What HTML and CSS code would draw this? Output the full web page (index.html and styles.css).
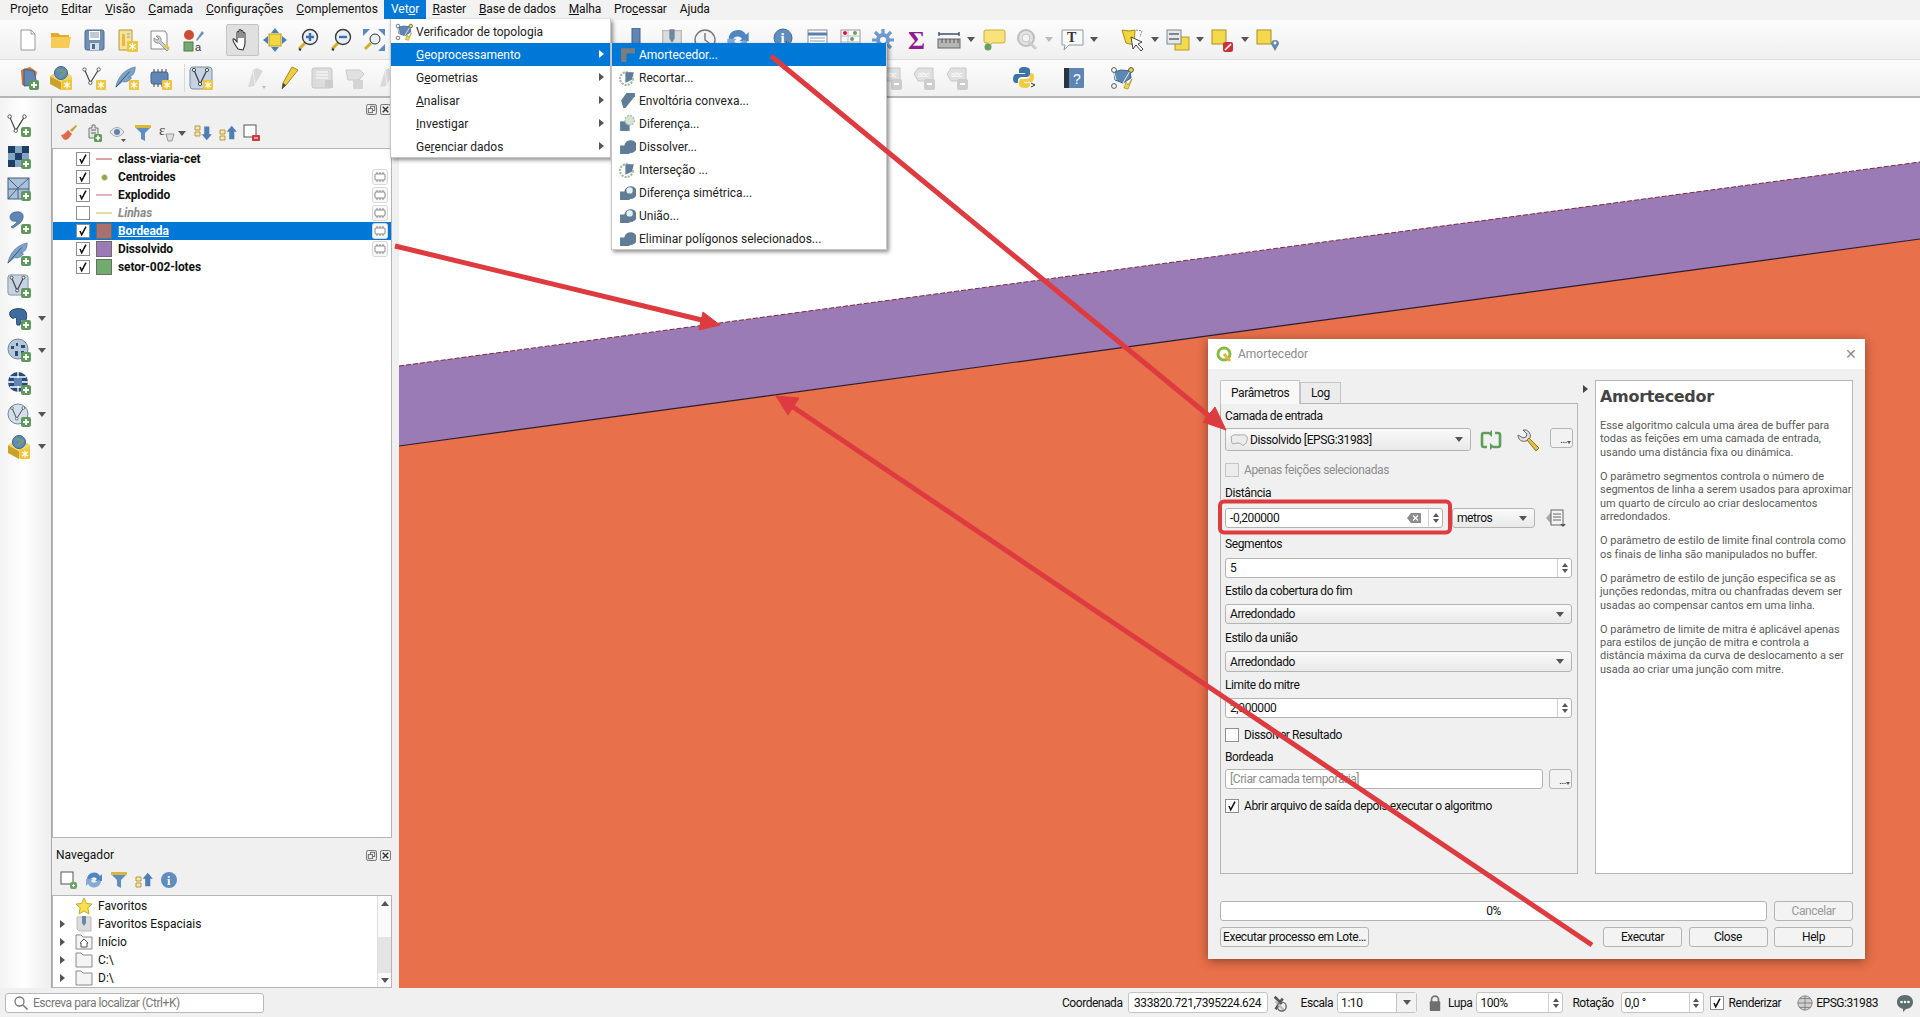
FILE: index.html
```html
<!DOCTYPE html>
<html lang="pt">
<head>
<meta charset="utf-8">
<title>QGIS - Amortecedor</title>
<link rel="stylesheet" href="styles.css">
</head>
<body>
<svg class="defs" aria-hidden="true">
<defs>
<symbol id="plus" viewBox="0 0 10 10"><rect width="10" height="10" rx="2" fill="#5f9a5c"/><path d="M5 2v6M2 5h6" stroke="#fff" stroke-width="2"/></symbol>
<symbol id="ast" viewBox="0 0 10 10"><rect width="10" height="10" rx="1" fill="#eec53c"/><path d="M5 1.5v7M2 3l6 4M8 3 2 7" stroke="#fff" stroke-width="1.2"/></symbol>
<symbol id="new" viewBox="0 0 24 24"><path d="M5 2h10l4 4v16H5z" fill="#fff" stroke="#9a9a9a"/><path d="M15 2v4h4" fill="none" stroke="#9a9a9a"/></symbol>
<symbol id="open" viewBox="0 0 24 24"><path d="M2 5h7l2 2h9v3H2z" fill="#e6a92c"/><path d="M2 9h20l-2 11H2z" fill="#f6cb58"/></symbol>
<symbol id="save" viewBox="0 0 24 24"><rect x="3" y="2" width="19" height="20" rx="2" fill="#6e90b6" stroke="#4e6b8c"/><rect x="7" y="3" width="11" height="9" fill="#fff"/><path d="M8 5h9M8 7h9M8 9h9" stroke="#7d93ab"/><rect x="8" y="15" width="9" height="7" fill="#d9dfe6"/><rect x="10" y="16" width="3" height="5" fill="#4e6b8c"/></symbol>
<symbol id="saveas" viewBox="0 0 24 24"><path d="M4 2h13v20H4z" fill="#f7e3a1" stroke="#b8962e"/><path d="M7 6h3v12H7z" fill="#e6b93c"/><path d="M12 6h3M12 9h3" stroke="#999"/><use href="#ast" x="12" y="13" width="11" height="11"/></symbol>
<symbol id="props" viewBox="0 0 24 24"><path d="M3 3h14l2 3v15H3z" fill="#fff" stroke="#888"/><path d="M8 8a4 4 0 0 1 5 5l8 8-2 2-8-8a4 4 0 0 1-5-5l3 2 2-1z" fill="#cfcfcf" stroke="#777" stroke-width=".7"/><path d="M16 18l4 4 2-2-4-4z" fill="#e3c34c"/></symbol>
<symbol id="style" viewBox="0 0 24 24"><circle cx="8" cy="7" r="5" fill="#cc4b32"/><rect x="3" y="14" width="9" height="9" fill="#74a872" stroke="#4f7d4c"/><path d="M15 12l6-9 2 2-7 8z" fill="#6b93bd"/><text x="14" y="23" class="ictxt">a</text></symbol>
<symbol id="pan" viewBox="0 0 24 24"><path d="M8 21c-2-3-5-7-5-9s2-1 3 1l1 1V5c0-2 2-2 2 0v5-7c0-2 2-2 2 0v7-6c0-2 2-2 2 0v6-4c0-2 2-2 2 0v9c0 3-1 5-2 7z" fill="#fff" stroke="#333" stroke-width="1.1"/></symbol>
<symbol id="pansel" viewBox="0 0 24 24"><rect x="6" y="6" width="12" height="12" fill="#f2d83e" stroke="#b49b25"/><path d="M12 0l4 5H8zM12 24l-4-5h8zM0 12l5-4v8zM24 12l-5 4V8z" fill="#4f7fb2"/></symbol>
<symbol id="zin" viewBox="0 0 24 24"><path d="M10 14l-7 7" stroke="#d4ae2e" stroke-width="3"/><path d="M3 21l2 1" stroke="#333" stroke-width="2"/><circle cx="14" cy="9" r="7.5" fill="#e8eef6" stroke="#3a3a3a" stroke-width="1.4"/><path d="M14 5v8M10 9h8" stroke="#3f6fa8" stroke-width="2.4"/></symbol>
<symbol id="zout" viewBox="0 0 24 24"><path d="M10 14l-7 7" stroke="#d4ae2e" stroke-width="3"/><path d="M3 21l2 1" stroke="#333" stroke-width="2"/><circle cx="14" cy="9" r="7.5" fill="#e8eef6" stroke="#3a3a3a" stroke-width="1.4"/><path d="M10 9h8" stroke="#3f6fa8" stroke-width="2.4"/></symbol>
<symbol id="zfull" viewBox="0 0 24 24"><path d="M1 1h7L1 8zM23 1h-7l7 7zM23 23h-7l7-7z" fill="#5d8abb"/><path d="M9 15l-6 6" stroke="#d4ae2e" stroke-width="3"/><circle cx="13" cy="11" r="5" fill="#e8eef6" stroke="#333"/></symbol>
<symbol id="lbar" viewBox="0 0 24 24"><path d="M5 0h8v18h9v5H5z" fill="#5f86b4" stroke="#3e6288"/></symbol>
<symbol id="clock" viewBox="0 0 24 24"><circle cx="12" cy="12" r="10" fill="#f3f3f3" stroke="#777" stroke-width="1.4"/><path d="M12 5v7l4 3" fill="none" stroke="#777" stroke-width="1.4"/></symbol>
<symbol id="info" viewBox="0 0 24 24"><circle cx="11" cy="10" r="9" fill="#5f8dbd" stroke="#3f6b9b"/><text x="8.5" y="15" class="icinfo">i</text><path d="M14 13l8 6-4 .5-1 4z" fill="#fff" stroke="#555"/></symbol>
<symbol id="table" viewBox="0 0 24 24"><rect x="3" y="2" width="19" height="20" fill="#fff" stroke="#7c8ea3"/><path d="M3 6h19" stroke="#5b7fa8" stroke-width="3"/><path d="M5 10h15M5 13h15M5 16h15M5 19h15" stroke="#8ea4bb"/></symbol>
<symbol id="stats" viewBox="0 0 24 24"><rect x="3" y="2" width="19" height="20" fill="#fff" stroke="#999"/><path d="M3 8h19M3 14h19M10 2v20" stroke="#bbb"/><circle cx="7" cy="5" r="2" fill="#d14"/><circle cx="17" cy="5" r="2" fill="#6a9e66"/><circle cx="14" cy="11" r="2" fill="#6a9e66"/><circle cx="7" cy="17" r="2" fill="#d14"/></symbol>
<symbol id="gear" viewBox="0 0 24 24"><circle cx="12" cy="12" r="7" fill="#6e9ace"/><path d="M12 1v22M1 12h22M4 4l16 16M20 4 4 20" stroke="#6e9ace" stroke-width="3.2"/><circle cx="12" cy="12" r="3" fill="#fff"/></symbol>
<symbol id="sigma" viewBox="0 0 24 24"><text x="4" y="21" class="icsig">Σ</text></symbol>
<symbol id="measure" viewBox="0 0 24 24"><path d="M2 6h20M2 4v4M22 4v4" stroke="#3d5168" stroke-width="1.4"/><rect x="1" y="11" width="22" height="9" fill="#b6b6b6" stroke="#666"/><path d="M5 11v4M9 11v4M13 11v4M17 11v4M21 11v4" stroke="#555"/></symbol>
<symbol id="tip" viewBox="0 0 24 24"><path d="M4 2h17a2 2 0 0 1 2 2v9a2 2 0 0 1-2 2H10l-3 4-1-4H4a2 2 0 0 1-2-2V4a2 2 0 0 1 2-2z" fill="#f8e27a" stroke="#c9ae3a"/><circle cx="6" cy="19" r="3.5" fill="#6a9e66"/></symbol>
<symbol id="gzoom" viewBox="0 0 24 24"><circle cx="11" cy="10" r="8" fill="#e3e3e3" stroke="#bdbdbd" stroke-width="2"/><circle cx="11" cy="10" r="4" fill="#f3f3f3" stroke="#c4c4c4"/><path d="M14 14l7 7" stroke="#ccc" stroke-width="3"/></symbol>
<symbol id="ttool" viewBox="0 0 24 24"><path d="M2 2h21v15H9l-5 5 1-5H2z" fill="#f7f9fb" stroke="#8d98a3"/><text x="7" y="14" class="ict">T</text></symbol>
<symbol id="sel" viewBox="0 0 24 24"><path d="M1 2l7 1 6-1-1 15-8-2z" fill="#f1d53a" stroke="#a28c1e"/><path d="M15 2l6 1-2 6" fill="none" stroke="#888" stroke-dasharray="2 1"/><path d="M10 9l2 12 3-4 5 6 2-2-5-5 4-2z" fill="#fff" stroke="#444"/></symbol>
<symbol id="selform" viewBox="0 0 24 24"><rect x="9" y="9" width="14" height="13" fill="#f2d94e" stroke="#b49b25"/><rect x="1" y="2" width="14" height="14" fill="#e7e7e7" stroke="#7a8794"/><path d="M3 6h10M3 11h10" stroke="#7a8794" stroke-width="2"/></symbol>
<symbol id="desel" viewBox="0 0 24 24"><rect x="1" y="2" width="14" height="14" fill="#f4da4a" stroke="#a88f24"/><rect x="12" y="14" width="10" height="10" rx="2" fill="#c8343a"/><path d="M14 22l6-6" stroke="#fff" stroke-width="1.6"/></symbol>
<symbol id="selloc" viewBox="0 0 24 24"><rect x="1" y="2" width="14" height="14" fill="#f4da4a" stroke="#a88f24"/><path d="M19 23l-4-7a4 4 0 1 1 8 0z" fill="#6b8aa8"/><circle cx="19" cy="15" r="1.4" fill="#fff"/></symbol>
<symbol id="stack" viewBox="0 0 24 24"><path d="M5 4l9-3 7 5-3 14-12-1z" fill="#d7772e"/><path d="M8 3l10 2 3 14-13 1z" fill="#5f86b4" stroke="#3e6288"/><use href="#plus" x="13" y="14" width="10" height="10"/></symbol>
<symbol id="cube" viewBox="0 0 24 24"><path d="M1 10l11 6v8L1 18z" fill="#c9a227"/><path d="M12 16l11-6v8l-11 6z" fill="#f1d34a"/><path d="M1 10 12 3l11 7-11 6z" fill="#eed46c"/><circle cx="12" cy="7" r="6.5" fill="#5e8bbc" stroke="#3c638d"/><path d="M8 5c3-2 6 0 8 1-1 3-5 2-5 5" stroke="#7a9f6a" stroke-width="2" fill="none"/><use href="#ast" x="13" y="14" width="10" height="10"/></symbol>
<symbol id="vnode" viewBox="0 0 24 24"><path d="M3 3l7 16L20 3" fill="none" stroke="#444" stroke-width="1.4"/><circle cx="3" cy="3" r="2" fill="#fff" stroke="#444"/><circle cx="10" cy="19" r="2" fill="#fff" stroke="#444"/><circle cx="20" cy="3" r="2" fill="#fff" stroke="#444"/></symbol>
<symbol id="vast" viewBox="0 0 24 24"><use href="#vnode" width="20" height="22"/><use href="#ast" x="14" y="14" width="10" height="10"/></symbol>
<symbol id="vplus" viewBox="0 0 24 24"><use href="#vnode" width="21" height="23"/><use href="#plus" x="14" y="14" width="10" height="10"/></symbol>
<symbol id="feather" viewBox="0 0 24 24"><path d="M1 23C3 13 9 4 22 1c0 7-3 10-7 11l3 1c-3 4-7 5-10 4z" fill="#7fa2c8" stroke="#466d97" stroke-width=".7"/><path d="M1 23 16 6" stroke="#2f4f72"/></symbol>
<symbol id="feathast" viewBox="0 0 24 24"><use href="#feather" width="22" height="22"/><use href="#ast" x="14" y="14" width="10" height="10"/></symbol>
<symbol id="featplus" viewBox="0 0 24 24"><use href="#feather" width="22" height="22"/><use href="#plus" x="14" y="14" width="10" height="10"/></symbol>
<symbol id="chip" viewBox="0 0 24 24"><rect x="3" y="6" width="17" height="12" rx="2" fill="#5f86b4" stroke="#3e6288"/><path d="M6 3v3M10 3v3M14 3v3M18 3v3M6 18v3M10 18v3M14 18v3" stroke="#444"/><use href="#ast" x="14" y="14" width="10" height="10"/></symbol>
<symbol id="vbox" viewBox="0 0 24 24"><rect x="1" y="1" width="22" height="22" rx="3" fill="#c5d3e3" stroke="#7d8ea1"/><path d="M5 4l6 14 7-14" fill="none" stroke="#444" stroke-width="1.3"/><circle cx="5" cy="4" r="1.6" fill="#fff" stroke="#444"/><circle cx="11" cy="18" r="1.6" fill="#fff" stroke="#444"/><circle cx="18" cy="4" r="1.6" fill="#fff" stroke="#444"/></symbol>
<symbol id="vboxast" viewBox="0 0 24 24"><use href="#vbox"/><use href="#ast" x="14" y="14" width="10" height="10"/></symbol>
<symbol id="vboxplus" viewBox="0 0 24 24"><use href="#vbox" width="22" height="22"/><use href="#plus" x="14" y="14" width="10" height="10"/></symbol>
<symbol id="gpen" viewBox="0 0 24 24"><path d="M4 21 9 4l4-2 6 3-9 15z" fill="#d9d9d9"/><path d="M9 4l2 16" stroke="#eee"/><path d="M18 20h4l-2 3z" fill="#bbb"/></symbol>
<symbol id="pencil" viewBox="0 0 24 24"><path d="M15 1l6 3-12 15-4 4 1-6z" fill="#f0d041" stroke="#a08820"/><path d="M5 23l1-6 3 2z" fill="#444"/></symbol>
<symbol id="gsave" viewBox="0 0 24 24"><rect x="2" y="2" width="20" height="20" rx="2" fill="#dcdcdc" stroke="#c6c6c6"/><path d="M6 6h12M6 9h12M6 12h12" stroke="#f3f3f3" stroke-width="1.4"/><rect x="15" y="14" width="8" height="8" fill="#ccc"/></symbol>
<symbol id="gcloud" viewBox="0 0 24 24"><path d="M3 4h14l4 4-5 6H5z" fill="#e1e1e1" stroke="#c9c9c9"/><rect x="10" y="14" width="10" height="9" fill="#d4d4d4"/></symbol>
<symbol id="abc" viewBox="0 0 24 24"><path d="M5 2h15v13H5L1 8z" fill="#e0e0e0" stroke="#c8c8c8"/><text x="5" y="11" class="icabc">abc</text><rect x="11" y="13" width="11" height="11" rx="2" fill="#cdcdcd"/><path d="M14 18h5" stroke="#fff" stroke-width="2"/></symbol>
<symbol id="python" viewBox="0 0 24 24"><path d="M11 1c-4 0-5 2-5 3v3h6v1H3c-2 0-3 3-3 5s1 4 3 4h2v-3c0-2 2-3 4-3h5c1 0 3-1 3-3V4c0-2-3-3-6-3z" fill="#3c74a8"/><path d="M12 22c4 0 5-2 5-3v-2h-6v-1h7c2 0 3-2 3-5s-1-4-3-4h-1v3c0 2-2 3-4 3H8c-1 0-2 1-2 3v3c0 2 3 3 6 3z" fill="#f4cc44"/><path d="M18 17l4 2-4 2" fill="none" stroke="#333"/></symbol>
<symbol id="help" viewBox="0 0 24 24"><rect x="2" y="2" width="20" height="20" rx="1" fill="#5c85b4"/><rect x="2" y="2" width="5" height="20" fill="#2a3340"/><text x="11" y="18" class="ichelp">?</text></symbol>
<symbol id="topo" viewBox="0 0 24 24"><path d="M4 6l7-2 9 1 1 7-8 5-8-3z" fill="#5f86b4" stroke="#3e6288"/><path d="M4 6l2 8M20 5l-7 12" stroke="#eee"/><circle cx="4" cy="4" r="2.4" fill="#fff" stroke="#555"/><circle cx="21" cy="4" r="2.4" fill="#f3d53c" stroke="#555"/><circle cx="4" cy="20" r="2.4" fill="#fff" stroke="#555"/><path d="M14 22l2-6 2 3 4-6-4 10z" fill="#f3d53c" stroke="#8f7a18" stroke-width=".6"/></symbol>
<symbol id="raster" viewBox="0 0 24 24"><path d="M1 1h7v7H1zM15 1h7v7h-7zM8 8h7v7H8zM1 15h7v7H1z" fill="#1d3f66"/><path d="M8 1h7v7H8zM1 8h7v7H1zM15 8h7v7h-7zM8 15h7v7H8z" fill="#84a4c6"/><use href="#plus" x="14" y="14" width="10" height="10"/></symbol>
<symbol id="mesh" viewBox="0 0 24 24"><rect x="1" y="1" width="21" height="21" fill="#a9c1da" stroke="#45607d"/><path d="M1 1l10 10 11-10M1 22l10-11M1 12h21M11 11v11" stroke="#45607d" fill="none"/><use href="#plus" x="14" y="14" width="10" height="10"/></symbol>
<symbol id="comma" viewBox="0 0 24 24"><path d="M9 2c5-1 8 2 7 6-1 5-6 7-10 10l-2-1c3-2 6-4 6-6-3 1-7 0-7-4 0-3 3-5 6-5z" fill="#5f86b4" stroke="#3e6288" stroke-width=".7"/><use href="#plus" x="14" y="14" width="10" height="10"/></symbol>
<symbol id="pg" viewBox="0 0 24 24"><path d="M3 6c2-4 14-5 16 0 2 6-1 11-3 12 0-3-1-5-2-5l-1 6h-3c-1-3 0-6-1-8-2 1-3 2-4 1C3 11 2 8 3 6z" fill="#3f6d9e" stroke="#27476b"/><use href="#plus" x="14" y="14" width="10" height="10"/></symbol>
<symbol id="gwms" viewBox="0 0 24 24"><circle cx="11" cy="11" r="10" fill="#b5c7db" stroke="#6d87a3"/><path d="M4 8h3v3H4zM9 5h2v3H9zM14 7h4v3h-4zM8 13h3v5H8zM14 13h3v3h-3z" fill="#2e4b6b"/><use href="#plus" x="14" y="14" width="10" height="10"/></symbol>
<symbol id="wcs" viewBox="0 0 24 24"><circle cx="11" cy="11" r="10" fill="#274a78"/><path d="M1 11h20M11 1v20M3 6h16M3 16h16" stroke="#fff" stroke-width="1.3"/><rect x="7" y="7" width="8" height="8" fill="#5f86b4"/><use href="#plus" x="14" y="14" width="10" height="10"/></symbol>
<symbol id="wfs" viewBox="0 0 24 24"><circle cx="11" cy="11" r="10" fill="#d3dfeb" stroke="#6d87a3"/><use href="#vnode" x="3" y="3" width="16" height="16"/><use href="#plus" x="14" y="14" width="10" height="10"/></symbol>
<symbol id="brush" viewBox="0 0 18 18"><path d="M10 6l6-5 1 1-5 6z" fill="#c8a02b"/><path d="M1 11c3 0 5-3 7-5l4 4c-2 3-4 6-7 6-2-1-3-3-4-5z" fill="#dd6b48"/></symbol>
<symbol id="addgrp" viewBox="0 0 18 18"><path d="M7 1h3v3h3v10H4V4h3z" fill="#e3e3e3" stroke="#6c7c70"/><path d="M6 6h5M6 9h5" stroke="#666"/><use href="#plus" x="9" y="10" width="8" height="8"/></symbol>
<symbol id="eye" viewBox="0 0 18 18"><path d="M1 8c4-6 10-6 14 0-4 6-10 6-14 0z" fill="#e6e6e6" stroke="#aaa"/><circle cx="8" cy="8" r="3" fill="#5d83ab"/><path d="M12 15h5l-2.500 3z" fill="#555"/></symbol>
<symbol id="filter" viewBox="0 0 18 18"><path d="M1 1h16v2l-6 6v8l-4-2V9L1 3z" fill="#5f8fbf"/><path d="M1 1h16v3H1z" fill="#d8b93a"/></symbol>
<symbol id="epsilon" viewBox="0 0 18 18"><text x="1" y="11" class="iceps">ε</text><path d="M8 10h8l-2 7h-4z" fill="#ddd" stroke="#999"/></symbol>
<symbol id="expand" viewBox="0 0 18 18"><path d="M1 2h5v4H1zM1 8h5v4H1z" fill="#f4e6b0" stroke="#b59b3e"/><path d="M9 1h6v9h3l-6 7-6-7h3z" fill="#4f7fb2" transform="scale(.85) translate(3 2)"/></symbol>
<symbol id="collapse" viewBox="0 0 18 18"><path d="M1 6h5v4H1zM1 12h5v4H1z" fill="#f4e6b0" stroke="#b59b3e"/><path d="M12 1l6 7h-3v9H9V8H6z" fill="#4f7fb2" transform="scale(.85) translate(3 1)"/></symbol>
<symbol id="rem" viewBox="0 0 18 18"><rect x="1" y="1" width="12" height="12" fill="#fff" stroke="#555"/><rect x="9" y="11" width="8" height="6" rx="1" fill="#cc3a3a"/><path d="M11 14h4" stroke="#fff"/></symbol>
<symbol id="newf" viewBox="0 0 18 18"><rect x="1" y="1" width="12" height="12" fill="#fff" stroke="#555"/><rect x="10" y="11" width="7" height="7" rx="2" fill="#6aa567"/><path d="M13.500 13v3M12 14.500h3" stroke="#fff"/></symbol>
<symbol id="refresh" viewBox="0 0 18 18"><path d="M2 8a7 7 0 0 1 13-3l2-2v7h-7l2-2a4 4 0 0 0-7 1z" fill="#4f86c0"/><path d="M16 10a7 7 0 0 1-13 3l-2 2V8h7l-2 2a4 4 0 0 0 7-1z" fill="#85abd2"/></symbol>
<symbol id="inf" viewBox="0 0 18 18"><circle cx="9" cy="9" r="8" fill="#5f8dbd"/><text x="7" y="14" class="icinf">i</text></symbol>
<symbol id="star" viewBox="0 0 18 18"><path d="M9 1l2.400 5.500L17 7l-4.200 3.800L14 17l-5-3-5 3 1.200-6.200L1 7l5.600-.5z" fill="#f7e14e" stroke="#c8a92a"/></symbol>
<symbol id="bmark" viewBox="0 0 18 18"><path d="M2 2h14v14H4l-2-2z" fill="#dcdcdc" stroke="#bbb"/><path d="M7 1h4v7l-2 3-2-3z" fill="#6d87a3"/></symbol>
<symbol id="fold" viewBox="0 0 18 18"><path d="M1 2h5l2 2h9v12H1z" fill="#f4f4f4" stroke="#8a8a8a"/></symbol>
<symbol id="home" viewBox="0 0 18 18"><use href="#fold"/><path d="M9 6l4 4h-1v4H6v-4H5z" fill="#fff" stroke="#555"/></symbol>
<symbol id="ind" viewBox="0 0 16 16"><rect x=".5" y=".5" width="15" height="15" rx="2" fill="#f8f8f8" stroke="#d8d8d8"/><rect x="3" y="5" width="10" height="6" rx="1" fill="#fff" stroke="#8a8a8a"/><path d="M5 3v2M8 3v2M11 3v2M5 11v2M8 11v2M11 11v2" stroke="#8a8a8a"/></symbol>
<symbol id="chk" viewBox="0 0 14 14"><path d="M3.500 7l2 4.500L10.500 2" fill="none" stroke="#111" stroke-width="1.800"/></symbol>
<symbol id="m-buf" viewBox="0 0 16 16"><path d="M2 2h13v5H7v8H2z" fill="#7d7d7d"/></symbol>
<symbol id="m-clip" viewBox="0 0 16 16"><circle cx="7" cy="9" r="6" fill="none" stroke="#9fbb9d" stroke-width="2" stroke-dasharray="2 1"/><path d="M6 3h8l-2 7-6 3z" fill="#5f7d96"/></symbol>
<symbol id="m-hull" viewBox="0 0 16 16"><path d="M2 8l5-7h8v3L6 15H4z" fill="#5f7d96"/></symbol>
<symbol id="m-diff" viewBox="0 0 16 16"><rect x="1" y="6" width="9" height="9" fill="#5f7d96"/><circle cx="10" cy="5" r="4.500" fill="#d7e4d5" stroke="#9fbb9d" stroke-dasharray="2 1"/></symbol>
<symbol id="m-dis" viewBox="0 0 16 16"><path d="M1 7h4a6 6 0 1 1 5 7v1H1z" fill="#5f7d96"/></symbol>
<symbol id="m-sym" viewBox="0 0 16 16"><path d="M1 7h4a6 6 0 1 1 5 7v1H1z" fill="#5f7d96"/><circle cx="10" cy="6" r="3" fill="#e6edf3"/></symbol>
<symbol id="qlogo" viewBox="0 0 16 16"><circle cx="8" cy="8" r="6" fill="none" stroke="#8cbb45" stroke-width="3"/><path d="M8 8l6 7" stroke="#e2b43a" stroke-width="3"/></symbol>
<symbol id="loop" viewBox="0 0 22 22"><path d="M9 4H4a2 2 0 0 0-2 2v10a2 2 0 0 0 2 2h3M13 18h5a2 2 0 0 0 2-2V6a2 2 0 0 0-2-2h-3" fill="none" stroke="#5e9e5b" stroke-width="2.600"/><path d="M12 1v7L8 4.500zM10 14v7l4-3.500z" fill="#5e9e5b"/></symbol>
<symbol id="wrench" viewBox="0 0 24 24"><path d="M2 7a6 6 0 0 0 8 6l2-1 2-2a6 6 0 0 0-7-8l4 4-1 3-3 1z" fill="#e2e2e2" stroke="#666"/><path d="M11 12l2-2 10 10-3 3z" fill="#e0c040" stroke="#8b7720"/></symbol>
<symbol id="poly" viewBox="0 0 18 14"><path d="M1 4c2-3 5-2 8-2s7-1 8 2-1 7-3 8-3-2-6-2-5 2-6 0 0-4-1-6z" fill="#ececec" stroke="#a5a5a5"/></symbol>
<symbol id="data" viewBox="0 0 22 20"><path d="M1 10l6-7v14z" fill="#aaa"/><rect x="6" y="2" width="12" height="15" fill="#f3f3f3" stroke="#666"/><path d="M8 6h8M8 9h8M8 12h8" stroke="#666"/><path d="M15 16h6l-3 3z" fill="#555"/></symbol>
<symbol id="nocrs" viewBox="0 0 18 22"><path d="M3 4l8 8m-7 6 8-12" stroke="#555" stroke-width="3"/><path d="M4 9l9 10" stroke="#c0c0c0" stroke-width="3"/><circle cx="11" cy="15" r="5" fill="none" stroke="#666" stroke-width="1.600"/></symbol>
<symbol id="lock" viewBox="0 0 16 20"><path d="M4 9V6a4 4 0 0 1 8 0v3" fill="none" stroke="#777" stroke-width="2"/><rect x="2" y="8" width="12" height="11" rx="1" fill="#6f6f6f"/></symbol>
<symbol id="globe" viewBox="0 0 18 18"><circle cx="9" cy="9" r="8" fill="#d0d0d0" stroke="#7d7d7d"/><path d="M1 9h16M9 1v16M3 4h12M3 14h12" stroke="#7d7d7d"/></symbol>
<symbol id="msg" viewBox="0 0 18 18"><path d="M9 1c5 0 8 3 8 7s-3 7-7 7l-3 3v-3c-3-1-6-3-6-7s3-7 8-7z" fill="#5e6e6e"/><circle cx="5.500" cy="8" r="1.300" fill="#fff"/><circle cx="9" cy="8" r="1.300" fill="#fff"/><circle cx="12.500" cy="8" r="1.300" fill="#fff"/></symbol>
<symbol id="search" viewBox="0 0 14 14"><circle cx="5.500" cy="5.500" r="4.500" fill="none" stroke="#777" stroke-width="1.300"/><path d="M9 9l4.500 4.500" stroke="#777" stroke-width="1.500"/></symbol>
<symbol id="clear" viewBox="0 0 14 10"><path d="M4 0h10v10H4L0 5z" fill="#8c8c8c"/><path d="M6 2.500l5 5m0-5-5 5" stroke="#fff" stroke-width="1.200"/></symbol>
<symbol id="dockf" viewBox="0 0 12 12"><rect x=".5" y=".5" width="11" height="11" rx="2" fill="#eee" stroke="#666"/><rect x="5" y="2.500" width="4.500" height="4.500" fill="none" stroke="#666"/><rect x="2.500" y="5" width="4.500" height="4.500" fill="#eee" stroke="#666"/></symbol>
<symbol id="dockx" viewBox="0 0 12 12"><rect x=".5" y=".5" width="11" height="11" rx="2" fill="#eee" stroke="#666"/><path d="M3 3l6 6m0-6-6 6" stroke="#333" stroke-width="1.500"/></symbol>
</defs>
</svg>

<div class="app">
  <nav class="menubar">
    <span class="mi">Pro<u>j</u>eto</span><span class="mi"><u>E</u>ditar</span><span class="mi"><u>V</u>isão</span><span class="mi"><u>C</u>amada</span><span class="mi"><u>C</u>onfigurações</span><span class="mi"><u>C</u>omplementos</span><span class="mi act">Vet<u>o</u>r</span><span class="mi"><u>R</u>aster</span><span class="mi"><u>B</u>ase de dados</span><span class="mi"><u>M</u>alha</span><span class="mi">Pro<u>c</u>essar</span><span class="mi">A<u>j</u>uda</span>
  </nav>

  <div class="tbar r1">
    <span class="grip"></span>
    <span class="tb"><svg class="i"><use href="#new"/></svg></span>
    <span class="tb"><svg class="i"><use href="#open"/></svg></span>
    <span class="tb"><svg class="i"><use href="#save"/></svg></span>
    <span class="tb"><svg class="i"><use href="#saveas"/></svg></span>
    <span class="tb"><svg class="i"><use href="#props"/></svg></span>
    <span class="tb"><svg class="i"><use href="#style"/></svg></span>
    <span class="sep s16"></span>
    <span class="tb on"><svg class="i"><use href="#pan"/></svg></span>
    <span class="tb"><svg class="i"><use href="#pansel"/></svg></span>
    <span class="tb"><svg class="i"><use href="#zin"/></svg></span>
    <span class="tb"><svg class="i"><use href="#zout"/></svg></span>
    <span class="tb"><svg class="i"><use href="#zfull"/></svg></span>
    <span class="sp232"></span>
    <span class="tb"><svg class="i"><use href="#lbar"/></svg></span>
    <span class="tb"><svg class="i"><use href="#bmark"/></svg></span>
    <span class="tb"><svg class="i"><use href="#clock"/></svg></span>
    <span class="tb"><svg class="i"><use href="#refresh"/></svg></span>
    <span class="sep s13"></span>
    <span class="tb"><svg class="i"><use href="#info"/></svg></span>
    <span class="tb"><svg class="i"><use href="#table"/></svg></span>
    <span class="tb"><svg class="i"><use href="#stats"/></svg></span>
    <span class="tb"><svg class="i"><use href="#gear"/></svg></span>
    <span class="tb"><svg class="i"><use href="#sigma"/></svg></span>
    <span class="tb w"><svg class="i"><use href="#measure"/></svg><span class="dn"></span></span>
    <span class="tb"><svg class="i"><use href="#tip"/></svg></span>
    <span class="tb w"><svg class="i"><use href="#gzoom"/></svg><span class="dn lite"></span></span>
    <span class="tb w"><svg class="i"><use href="#ttool"/></svg><span class="dn"></span></span>
    <span class="sep s16"></span>
    <span class="tb w"><svg class="i"><use href="#sel"/></svg><span class="dn"></span></span>
    <span class="tb w"><svg class="i"><use href="#selform"/></svg><span class="dn"></span></span>
    <span class="tb w"><svg class="i"><use href="#desel"/></svg><span class="dn"></span></span>
    <span class="tb"><svg class="i"><use href="#selloc"/></svg></span>
  </div>

  <div class="tbar r2">
    <span class="grip"></span>
    <span class="tb"><svg class="i"><use href="#stack"/></svg></span>
    <span class="tb"><svg class="i"><use href="#cube"/></svg></span>
    <span class="tb"><svg class="i"><use href="#vast"/></svg></span>
    <span class="tb"><svg class="i"><use href="#feathast"/></svg></span>
    <span class="tb"><svg class="i"><use href="#chip"/></svg></span>
    <span class="sep s8 ln"></span>
    <span class="tb"><svg class="i"><use href="#vboxast"/></svg></span>
    <span class="sep s22"></span>
    <span class="tb"><svg class="i"><use href="#gpen"/></svg></span>
    <span class="tb"><svg class="i"><use href="#pencil"/></svg></span>
    <span class="tb"><svg class="i"><use href="#gsave"/></svg></span>
    <span class="tb"><svg class="i"><use href="#gcloud"/></svg></span>
    <span class="tb"><svg class="i"><use href="#gpen"/></svg></span>
    <span class="sp471"></span>
    <span class="tb"><svg class="i"><use href="#abc"/></svg></span>
    <span class="tb"><svg class="i"><use href="#abc"/></svg></span>
    <span class="tb"><svg class="i"><use href="#abc"/></svg></span>
    <span class="sep s34"></span>
    <span class="tb"><svg class="i"><use href="#python"/></svg></span>
    <span class="sep s16"></span>
    <span class="tb"><svg class="i"><use href="#help"/></svg></span>
    <span class="sep s15"></span>
    <span class="tb"><svg class="i"><use href="#topo"/></svg></span>
  </div>

  <main class="work">
    <aside class="side">
      <span class="tb lt"><svg class="i"><use href="#vplus"/></svg></span>
      <span class="tb lt"><svg class="i"><use href="#raster"/></svg></span>
      <span class="tb lt"><svg class="i"><use href="#mesh"/></svg></span>
      <span class="tb lt"><svg class="i"><use href="#comma"/></svg></span>
      <span class="tb lt"><svg class="i"><use href="#featplus"/></svg></span>
      <span class="tb lt"><svg class="i"><use href="#vboxplus"/></svg></span>
      <span class="tb lt"><svg class="i"><use href="#pg"/></svg><span class="dn"></span></span>
      <span class="tb lt"><svg class="i"><use href="#gwms"/></svg><span class="dn"></span></span>
      <span class="tb lt"><svg class="i"><use href="#wcs"/></svg></span>
      <span class="tb lt"><svg class="i"><use href="#wfs"/></svg><span class="dn"></span></span>
      <span class="tb lt"><svg class="i"><use href="#cube"/></svg><span class="dn"></span></span>
    </aside>

    <section class="dock">
      <header class="dhead"><span>Camadas</span><span class="dbtns"><svg class="d"><use href="#dockf"/></svg><svg class="d"><use href="#dockx"/></svg></span></header>
      <div class="dtools">
        <svg class="p"><use href="#brush"/></svg><svg class="p"><use href="#addgrp"/></svg><svg class="p"><use href="#eye"/></svg><svg class="p"><use href="#filter"/></svg><svg class="p"><use href="#epsilon"/></svg><span class="dn sm"></span><svg class="p"><use href="#expand"/></svg><svg class="p"><use href="#collapse"/></svg><svg class="p"><use href="#rem"/></svg>
      </div>
      <div class="tree layers">
        <div class="row"><span class="cb"><svg><use href="#chk"/></svg></span><span class="sw"><span class="ln-sw rose"></span></span><span class="nm">class-viaria-cet</span></div>
        <div class="row"><span class="cb"><svg><use href="#chk"/></svg></span><span class="sw"><span class="dot"></span></span><span class="nm">Centroides</span><svg class="ind"><use href="#ind"/></svg></div>
        <div class="row"><span class="cb"><svg><use href="#chk"/></svg></span><span class="sw"><span class="ln-sw pink"></span></span><span class="nm">Explodido</span><svg class="ind"><use href="#ind"/></svg></div>
        <div class="row"><span class="cb"></span><span class="sw"><span class="ln-sw pale"></span></span><span class="nm off">Linhas</span><svg class="ind"><use href="#ind"/></svg></div>
        <div class="row cur"><span class="cb"><svg><use href="#chk"/></svg></span><span class="sw"><span class="fill brd"></span></span><span class="nm lnk">Bordeada</span><svg class="ind"><use href="#ind"/></svg></div>
        <div class="row"><span class="cb"><svg><use href="#chk"/></svg></span><span class="sw"><span class="fill dsv"></span></span><span class="nm">Dissolvido</span><svg class="ind"><use href="#ind"/></svg></div>
        <div class="row"><span class="cb"><svg><use href="#chk"/></svg></span><span class="sw"><span class="fill lot"></span></span><span class="nm">setor-002-lotes</span></div>
      </div>
      <div class="hsplit"></div>
      <header class="dhead nav"><span>Navegador</span><span class="dbtns"><svg class="d"><use href="#dockf"/></svg><svg class="d"><use href="#dockx"/></svg></span></header>
      <div class="dtools nt">
        <svg class="p"><use href="#newf"/></svg><svg class="p"><use href="#refresh"/></svg><svg class="p"><use href="#filter"/></svg><svg class="p"><use href="#collapse"/></svg><svg class="p"><use href="#inf"/></svg>
      </div>
      <div class="tree browser">
        <div class="blist">
          <div class="brow"><span class="exp none"></span><svg class="b"><use href="#star"/></svg><span>Favoritos</span></div>
          <div class="brow"><span class="exp"></span><svg class="b"><use href="#bmark"/></svg><span>Favoritos Espaciais</span></div>
          <div class="brow"><span class="exp"></span><svg class="b"><use href="#home"/></svg><span>Início</span></div>
          <div class="brow"><span class="exp"></span><svg class="b"><use href="#fold"/></svg><span>C:\</span></div>
          <div class="brow"><span class="exp"></span><svg class="b"><use href="#fold"/></svg><span>D:\</span></div>
        </div>
        <div class="vscroll"><span class="au"></span><span class="track"><span class="thumb"></span></span><span class="ad"></span></div>
      </div>
    </section>

    <div class="vsplit"></div>

    <section class="canvas">
      <svg class="map" viewBox="0 0 1521 890" preserveAspectRatio="none">
        <rect width="1521" height="890" fill="#fff"/>
        <polygon points="0,348 1521,141 1521,890 0,890" fill="#e8704a"/>
        <polygon points="0,268 1521,64 1521,141 0,348" fill="#9b7bb5"/>
        <line x1="0" y1="268" x2="1521" y2="64" stroke="#7b2b3a" stroke-width="1" stroke-dasharray="5 2"/>
        <line x1="0" y1="348" x2="1521" y2="141" stroke="#2b1c2e" stroke-width="1.200"/>
      </svg>

      <div class="dlg">
        <div class="dtitle"><svg class="ql"><use href="#qlogo"/></svg><span>Amortecedor</span><span class="dclose">✕</span></div>
        <div class="dbody">
          <div class="dmain">
            <div class="params">
              <div class="tabs"><span class="tab sel">Parâmetros</span><span class="tab">Log</span></div>
              <div class="tabpane">
                <label class="lb">Camada de entrada</label>
                <div class="fr mt4">
                  <span class="combo c246 h23"><svg class="pl"><use href="#poly"/></svg><span>Dissolvido [EPSG:31983]</span><span class="dn end"></span></span>
                  <svg class="loop"><use href="#loop"/></svg>
                  <svg class="wr"><use href="#wrench"/></svg>
                  <span class="dots">...<span class="dn tiny"></span></span>
                </div>
                <div class="ck muted mt11"><span class="cb gr"></span><span>Apenas feições selecionadas</span></div>
                <label class="lb mt8">Distância</label>
                <div class="fr mt7">
                  <span class="input w218"><span class="grow">-0,200000</span><svg class="clr"><use href="#clear"/></svg><span class="spin"><i></i><b></b></span></span>
                  <span class="combo c83"><span>metros</span><span class="dn end"></span></span>
                  <svg class="dat"><use href="#data"/></svg>
                </div>
                <label class="lb mt8">Segmentos</label>
                <span class="input full mt6"><span class="grow">5</span><span class="spin"><i></i><b></b></span></span>
                <label class="lb mt5">Estilo da cobertura do fim</label>
                <span class="combo full mt5"><span>Arredondado</span><span class="dn end"></span></span>
                <label class="lb mt6">Estilo da união</label>
                <span class="combo full h21 mt5"><span>Arredondado</span><span class="dn end"></span></span>
                <label class="lb mt5">Limite do mitre</label>
                <span class="input full mt5"><span class="grow">2,000000</span><span class="spin"><i></i><b></b></span></span>
                <div class="ck mt10"><span class="cb"></span><span>Dissolver Resultado</span></div>
                <label class="lb mt7">Bordeada</label>
                <div class="fr mt4">
                  <span class="input w320 h21 ph">[Criar camada temporária]</span>
                  <span class="dots h21 ml6">...<span class="dn tiny"></span></span>
                </div>
                <div class="ck mt10"><span class="cb"><svg><use href="#chk"/></svg></span><span>Abrir arquivo de saída depois executar o algoritmo</span></div>
              </div>
            </div>
            <span class="coll"></span>
            <article class="help">
              <h1>Amortecedor</h1>
              <p>Esse algoritmo calcula uma área de buffer para<br>todas as feições em uma camada de entrada,<br>usando uma distância fixa ou dinâmica.</p>
              <p>O parâmetro segmentos controla o número de<br>segmentos de linha a serem usados para aproximar<br>um quarto de círculo ao criar deslocamentos<br>arredondados.</p>
              <p>O parâmetro de estilo de limite final controla como<br>os finais de linha são manipulados no buffer.</p>
              <p>O parâmetro de estilo de junção especifica se as<br>junções redondas, mitra ou chanfradas devem ser<br>usadas ao compensar cantos em uma linha.</p>
              <p>O parâmetro de limite de mitra é aplicável apenas<br>para estilos de junção de mitra e controla a<br>distância máxima da curva de deslocamento a ser<br>usada ao criar uma junção com mitre.</p>
            </article>
          </div>
          <div class="progline"><span class="prog">0%</span><span class="btn dim">Cancelar</span></div>
          <div class="btnline"><span class="btn auto">Executar processo em Lote…</span><span class="flex"></span><span class="btn">Executar</span><span class="btn">Close</span><span class="btn">Help</span></div>
        </div>
      </div>
    </section>
  </main>

  <footer class="status">
    <span class="loc"><svg class="sr"><use href="#search"/></svg><span>Escreva para localizar (Ctrl+K)</span></span>
    <span class="flex"></span>
    <span class="st">Coordenada</span>
    <span class="sbox coord">333820.721,7395224.624</span>
    <svg class="nc"><use href="#nocrs"/></svg>
    <span class="st ml13">Escala</span>
    <span class="sbox scale"><span class="grow">1:10</span><span class="cdrop"><span class="dn"></span></span></span>
    <svg class="lk"><use href="#lock"/></svg>
    <span class="st ml6">Lupa</span>
    <span class="sbox mag"><span class="grow">100%</span><span class="spin"><i></i><b></b></span></span>
    <span class="st ml9">Rotação</span>
    <span class="sbox rot"><span class="grow">0,0 °</span><span class="spin"><i></i><b></b></span></span>
    <span class="cb rnd"><svg><use href="#chk"/></svg></span>
    <span class="st ml5">Renderizar</span>
    <svg class="gl"><use href="#globe"/></svg>
    <span class="st ml3">EPSG:31983</span>
    <svg class="ms"><use href="#msg"/></svg>
  </footer>

  <div class="menu m1">
    <div class="mrow"><svg class="mic big"><use href="#topo"/></svg><span>Verificador de topologia</span></div>
    <div class="mrow hi"><span class="mic"></span><span><u>G</u>eoprocessamento</span><span class="mar"></span></div>
    <div class="mrow"><span class="mic"></span><span>G<u>e</u>ometrias</span><span class="mar"></span></div>
    <div class="mrow"><span class="mic"></span><span><u>A</u>nalisar</span><span class="mar"></span></div>
    <div class="mrow"><span class="mic"></span><span><u>I</u>nvestigar</span><span class="mar"></span></div>
    <div class="mrow"><span class="mic"></span><span>Ge<u>r</u>enciar dados</span><span class="mar"></span></div>
  </div>
  <div class="menu m2">
    <div class="mrow hi"><svg class="mic"><use href="#m-buf"/></svg><span>Amortecedor...</span></div>
    <div class="mrow"><svg class="mic"><use href="#m-clip"/></svg><span>Recortar...</span></div>
    <div class="mrow"><svg class="mic"><use href="#m-hull"/></svg><span>Envoltória convexa...</span></div>
    <div class="mrow"><svg class="mic"><use href="#m-diff"/></svg><span>Diferença...</span></div>
    <div class="mrow"><svg class="mic"><use href="#m-dis"/></svg><span>Dissolver...</span></div>
    <div class="mrow"><svg class="mic"><use href="#m-clip"/></svg><span>Interseção ...</span></div>
    <div class="mrow"><svg class="mic"><use href="#m-sym"/></svg><span>Diferença simétrica...</span></div>
    <div class="mrow"><svg class="mic"><use href="#m-sym"/></svg><span>União...</span></div>
    <div class="mrow"><svg class="mic"><use href="#m-dis"/></svg><span>Eliminar polígonos selecionados...</span></div>
  </div>

  <svg class="notes" viewBox="0 0 1920 1017">
    <g fill="#dd3b3f" stroke="#dd3b3f">
      <line x1="395" y1="246" x2="706" y2="321" stroke-width="5"/>
      <polygon points="720,325 699,330 703,312" stroke-width="1"/>
      <line x1="771" y1="56" x2="1214" y2="420" stroke-width="5"/>
      <polygon points="1226,430 1203,422 1215,407" stroke-width="1"/>
      <line x1="1592" y1="945" x2="790" y2="405" stroke-width="5"/>
      <polygon points="776,396 799,398 788,415" stroke-width="1"/>
      <rect x="1220" y="501.500" width="230" height="31" rx="4" fill="none" stroke-width="4"/>
    </g>
  </svg>
</div>
</body>
</html>
```

FILE: styles.css
```css
* { box-sizing: border-box; }
html, body { margin: 0; padding: 0; }
body { width: 1920px; height: 1017px; overflow: hidden; background: #f0f0f0; color: #111; font: 12px/16px Roboto, "Open Sans", sans-serif; }
.defs { position: absolute; width: 0; height: 0; }
.ictxt { font: 11px "Liberation Sans", sans-serif; fill: #333; }
.icinfo { font: bold 15px "Liberation Serif", serif; fill: #fff; }
.icsig { font: bold 26px "Liberation Serif", serif; fill: #8e1e8e; }
.ict { font: bold 14px "Liberation Serif", serif; fill: #333; }
.icabc { font: 7px "Liberation Sans", sans-serif; fill: #fff; }
.ichelp { font: 14px "Liberation Sans", sans-serif; fill: #fff; }
.iceps { font: 15px "Liberation Serif", serif; fill: #444; }
.icinf { font: bold 12px "Liberation Serif", serif; fill: #fff; }

.app { position: relative; width: 1920px; height: 1017px; display: flex; flex-direction: column; }
.flex, .grow { flex: 1; }

/* menu bar */
.menubar { height: 20px; display: flex; padding-left: 3.5px; background: #f2f2f2; flex: none; }
.mi { padding: 1px 6.5px 0; height: 19px; white-space: nowrap; }
.mi.act { background: #0078d7; color: #fff; }
.mi.act ~ .mi { letter-spacing: -.15px; }

/* toolbars */
.tbar { height: 39px; flex: none; display: flex; align-items: center; background: linear-gradient(#fcfcfc, #f0f0f0); border-top: 1px solid #dcdcdc; }
.tbar.r1 { border-top: 0; }
.tbar.r2 { border-bottom: 2px solid #b5b5b5; }
.grip { width: 11.5px; }
.tb { width: 33px; height: 32px; flex: none; display: flex; align-items: center; justify-content: center; position: relative; }
.tb.w { width: 45px; justify-content: flex-start; padding-left: 4.5px; }
.tb.w .dn { margin-left: 6px; }
.tb.on { background: #e0e0e0; border: 1px solid #c4c4c4; border-radius: 2px; }
.i { width: 24px; height: 24px; display: block; }
.sep { flex: none; height: 28px; }
.s8 { width: 8px; } .s13 { width: 13px; } .s15 { width: 15px; } .s16 { width: 16px; } .s22 { width: 22px; } .s34 { width: 34px; }
.sep.ln { border-right: 1px solid #d8d8d8; }
.sp232 { width: 232px; flex: none; }
.sp471 { width: 471px; flex: none; }
.dn { display: inline-block; width: 0; height: 0; border: 4px solid transparent; border-top: 5px solid #555; border-bottom: 0; flex: none; }
.dn.lite { border-top-color: #bbb; }
.dn.sm { margin: 0 2px 0 -5px; }

/* main */
.work { flex: 1; display: flex; min-height: 0; }
.side { width: 52px; flex: none; display: flex; flex-direction: column; padding-top: 11px; background: linear-gradient(90deg, #f3f3f3, #fff 45%, #eeeeee); border-right: 1px solid #a9a9a9; }
.tb.lt { width: 51px; height: 32.2px; justify-content: flex-start; padding-left: 7px; }
.tb.lt .dn { margin-left: 7px; }
.dock { width: 340px; flex: none; display: flex; flex-direction: column; background: #f0f0f0; }
.dhead { height: 22px; flex: none; display: flex; align-items: center; justify-content: space-between; padding: 0 1px 0 4px; }
.dbtns { display: flex; gap: 3px; }
.d { width: 11px; height: 11px; display: block; }
.dtools { height: 28px; flex: none; display: flex; align-items: center; gap: 6.500px; padding: 0 0 2px 8px; }
.dtools.nt { height: 29px; gap: 7px; }
.p { width: 18px; height: 18px; display: block; flex: none; }
.tree { background: #fff; border: 1px solid #b5b5b5; }
.layers { flex: 1; padding-top: 1px; font-weight: 700; letter-spacing: -.1px; }
.row { height: 18px; display: flex; align-items: center; padding-left: 23px; }
.row.cur { background: #0078d7; color: #fff; }
.cb { width: 14px; height: 14px; flex: none; display: block; background: #fff; border: 1px solid #8f8f8f; }
.cb svg { width: 12px; height: 12px; display: block; }
.cb.gr { background: #ececec; border-color: #c4c4c4; }
.sw { width: 16px; height: 16px; flex: none; margin: 0 6px; display: flex; align-items: center; justify-content: center; }
.ln-sw { width: 16px; height: 2px; }
.rose { background: #d9a3a6; } .pink { background: #e2b3c0; } .pale { background: #e0e0a8; }
.dot { width: 7px; height: 7px; border-radius: 50%; background: #8aa650; border: 1.500px solid #dcdcb0; }
.fill { width: 16px; height: 16px; border: 1px solid #6c6c6c; }
.brd { background: #a8706e; } .dsv { background: #9b7bb5; } .lot { background: #72ab6e; }
.nm.off { color: #8a8a8a; font-style: italic; }
.nm.lnk { text-decoration: underline; }
.ind { width: 16px; height: 16px; margin-left: auto; margin-right: 3px; flex: none; }
.hsplit { height: 6px; flex: none; }
.dhead.nav { height: 22px; }
.browser { height: 93px; flex: none; display: flex; }
.blist { flex: 1; padding-top: 1px; }
.brow { height: 18px; display: flex; align-items: center; }
.exp { width: 0; height: 0; margin: 0 10px 0 7px; border: 4px solid transparent; border-left: 5px solid #555; border-right: 0; }
.exp.none { border-left-color: transparent; }
.b { width: 18px; height: 18px; margin-right: 5px; flex: none; }
.vscroll { width: 14px; flex: none; display: flex; flex-direction: column; border-left: 1px solid #dedede; background: #fafafa; }
.au, .ad { height: 14px; flex: none; display: flex; align-items: center; justify-content: center; }
.au::before { content: ""; border: 4px solid transparent; border-bottom: 5px solid #555; border-top: 0; }
.ad::before { content: ""; border: 4px solid transparent; border-top: 5px solid #555; border-bottom: 0; }
.track { flex: 1; display: flex; flex-direction: column; padding-top: 27px; }
.thumb { flex: 1; background: #e4e4e4; }
.vsplit { width: 7px; flex: none; background: #f0f0f0; }
.canvas { flex: 1; position: relative; min-width: 0; overflow: visible; }
.map { width: 100%; height: 100%; display: block; }

/* dialog */
.dlg { position: absolute; left: 809px; top: 241px; width: 657px; height: 620px; background: #f0f0f0; box-shadow: 0 2px 10px rgba(0,0,0,.4); display: flex; flex-direction: column; letter-spacing: -.4px; }
.dtitle { height: 30px; flex: none; background: #fff; display: flex; align-items: center; padding: 0 8px; color: #8a8a8a; letter-spacing: 0; }
.ql { width: 16px; height: 16px; margin-right: 6px; }
.dclose { margin-left: auto; font-size: 14px; color: #8a8a8a; }
.dbody { flex: 1; display: flex; flex-direction: column; padding: 11px 12px 0; }
.dmain { height: 494px; flex: none; display: flex; }
.params { width: 358px; flex: none; display: flex; flex-direction: column; }
.tabs { height: 23px; flex: none; display: flex; align-items: flex-end; position: relative; z-index: 1; }
.tab { height: 21px; padding: 2px 10px 0; background: #ececec; border: 1px solid #c4c4c4; border-bottom: 0; }
.tab.sel { height: 24px; width: 80px; padding: 4px 0 0 10px; background: #f8f8f8; margin-bottom: -1px; border-radius: 2px 2px 0 0; }
.tabpane { flex: 1; border: 1px solid #b5b5b5; padding: 4px 4px 0; display: flex; flex-direction: column; background: #f0f0f0; }
.lb { display: block; height: 16px; flex: none; white-space: nowrap; }
.fr { display: flex; align-items: flex-start; flex: none; }
.mt4 { margin-top: 4px; } .mt5 { margin-top: 5px; } .mt6 { margin-top: 6px; } .mt7 { margin-top: 7px; } .mt8 { margin-top: 8px; } .mt10 { margin-top: 10px; } .mt11 { margin-top: 11px; }
.ml3 { margin-left: 3px; } .ml5 { margin-left: 5px; } .ml6 { margin-left: 6px; } .ml9 { margin-left: 9px; } .ml13 { margin-left: 13px; }
.combo { height: 20px; display: flex; align-items: center; padding: 0 4px; flex: none; background: linear-gradient(#fafafa, #e9e9e9); border: 1px solid #b4b4b4; border-radius: 3px; white-space: nowrap; }
.combo .end { margin-left: auto; margin-right: 3px; }
.c246 { width: 246px; } .c83 { width: 83px; margin-left: 9px; }
.h23 { height: 23px; } .h21 { height: 21px; }
.full { width: 347px; }
.pl { width: 18px; height: 14px; margin-right: 2px; flex: none; }
.loop { width: 22px; height: 22px; margin: 1px 14px 0 9px; flex: none; }
.wr { width: 24px; height: 24px; flex: none; margin-right: 10px; }
.dots { width: 23px; height: 20px; background: #f2f2f2; border: 1px solid #b4b4b4; border-radius: 3px; display: flex; align-items: flex-end; justify-content: flex-end; padding: 0 1px 2px; line-height: 10px; flex: none; font-size: 10px; }
.dn.tiny { border-width: 2.500px; border-top-width: 3px; border-bottom: 0; margin-bottom: 1px; }
.ml6.dots { margin-left: 6px; }
.ck { display: flex; align-items: center; gap: 5px; height: 14px; flex: none; white-space: nowrap; }
.ck.muted { color: #8e8e8e; }
.input { height: 20px; display: flex; align-items: center; padding-left: 4px; flex: none; background: #fff; border: 1px solid #b4b4b4; border-radius: 3px; white-space: nowrap; }
.w218 { width: 218px; } .w320 { width: 318px; }
.ph { color: #8a8a8a; }
.clr { width: 14px; height: 10px; margin-right: 7px; }
.spin { width: 14px; height: 100%; flex: none; border-left: 1px solid #d0d0d0; display: flex; flex-direction: column; align-items: center; justify-content: center; gap: 2px; }
.spin i { display: block; border: 3.500px solid transparent; border-bottom: 4px solid #555; border-top: 0; }
.spin b { display: block; border: 3.500px solid transparent; border-top: 4px solid #555; border-bottom: 0; }
.dat { width: 22px; height: 20px; margin-left: 10px; flex: none; }
.coll { width: 17px; flex: none; position: relative; }
.coll::before { content: ""; position: absolute; left: 5px; top: 5px; border: 4px solid transparent; border-left: 5px solid #444; border-right: 0; }
.help { width: 258px; flex: none; background: #fff; border: 1px solid #b5b5b5; padding: 0 3px 0 4px; color: #5a5a5a; font: 11px/13.400px Roboto, "Open Sans", sans-serif; letter-spacing: -.03px; white-space: nowrap; }
.help h1 { margin: 6px 0 12px; font: 700 16px/20px "DejaVu Sans", sans-serif; color: #444; letter-spacing: -.3px; }
.help p { margin: 0 0 10.700px; }
.progline { display: flex; gap: 7px; margin-top: 27px; height: 20px; flex: none; }
.prog { width: 547px; background: #fff; border: 1px solid #b4b4b4; border-radius: 3px; text-align: center; line-height: 18px; }
.btn { width: 79px; height: 20px; flex: none; text-align: center; background: #f3f3f3; border: 1px solid #b4b4b4; border-radius: 3px; line-height: 19px; white-space: nowrap; }
.btn.dim { color: #9a9a9a; }
.btn.auto { width: 149px; }
.btnline { display: flex; gap: 6.500px; margin-top: 6px; height: 20px; flex: none; }

/* status */
.status { height: 29px; flex: none; display: flex; align-items: center; padding: 0 6px 0 5px; background: #f0f0f0; white-space: nowrap; letter-spacing: -.45px; }
.loc { width: 259px; height: 20px; display: flex; align-items: center; background: #fff; border: 1px solid #b8b8b8; border-radius: 3px; padding-left: 8px; color: #777; }
.sr { width: 14px; height: 14px; margin-right: 5px; }
.st { flex: none; }
.sbox { height: 21px; flex: none; display: flex; align-items: center; background: #fff; border: 1px solid #c4c4c4; border-radius: 3px; padding-left: 3px; }
.coord { width: 140px; margin-left: 5px; justify-content: center; padding: 0; }
.nc { width: 16px; height: 20px; margin-left: 4px; flex: none; }
.scale { width: 80px; margin-left: 4px; }
.cdrop { width: 20px; height: 100%; display: flex; align-items: center; justify-content: center; background: #f2f2f2; border-left: 1px solid #c4c4c4; }
.lk { width: 14px; height: 18px; margin-left: 11px; flex: none; }
.mag { width: 87px; margin-left: 4px; }
.rot { width: 83px; margin-left: 7px; }
.cb.rnd { margin-left: 6px; }
.gl { width: 16px; height: 16px; margin-left: 16px; flex: none; }
.ms { width: 18px; height: 18px; margin-left: 18px; flex: none; }

/* menus */
.menu { position: absolute; background: #fff; box-shadow: 2px 2px 4px rgba(0,0,0,.45); border: 1px solid #c8c8c8; color: #222; white-space: nowrap; }
.m1 { left: 390px; top: 19px; width: 221px; padding-top: 1px; height: 139px; border-top: 0; }
.m2 { left: 611px; top: 43px; width: 276px; height: 207px; border-top: 0; }
.mrow { height: 23px; display: flex; align-items: center; position: relative; }
.mrow.hi { background: #0078d7; color: #fff; }
.m1 .mic { width: 18px; margin: 0 3px 0 4px; flex: none; }
.m2 .mic { width: 17px; height: 17px; margin: 0 3px 0 7px; flex: none; }
.mic.big { height: 20px; }
.mar { position: absolute; right: 6px; top: 7px; border: 4px solid transparent; border-left: 5px solid #555; border-right: 0; }
.mrow.hi .mar { border-left-color: #fff; }

.notes { position: absolute; left: 0; top: 0; width: 1920px; height: 1017px; pointer-events: none; }
```
